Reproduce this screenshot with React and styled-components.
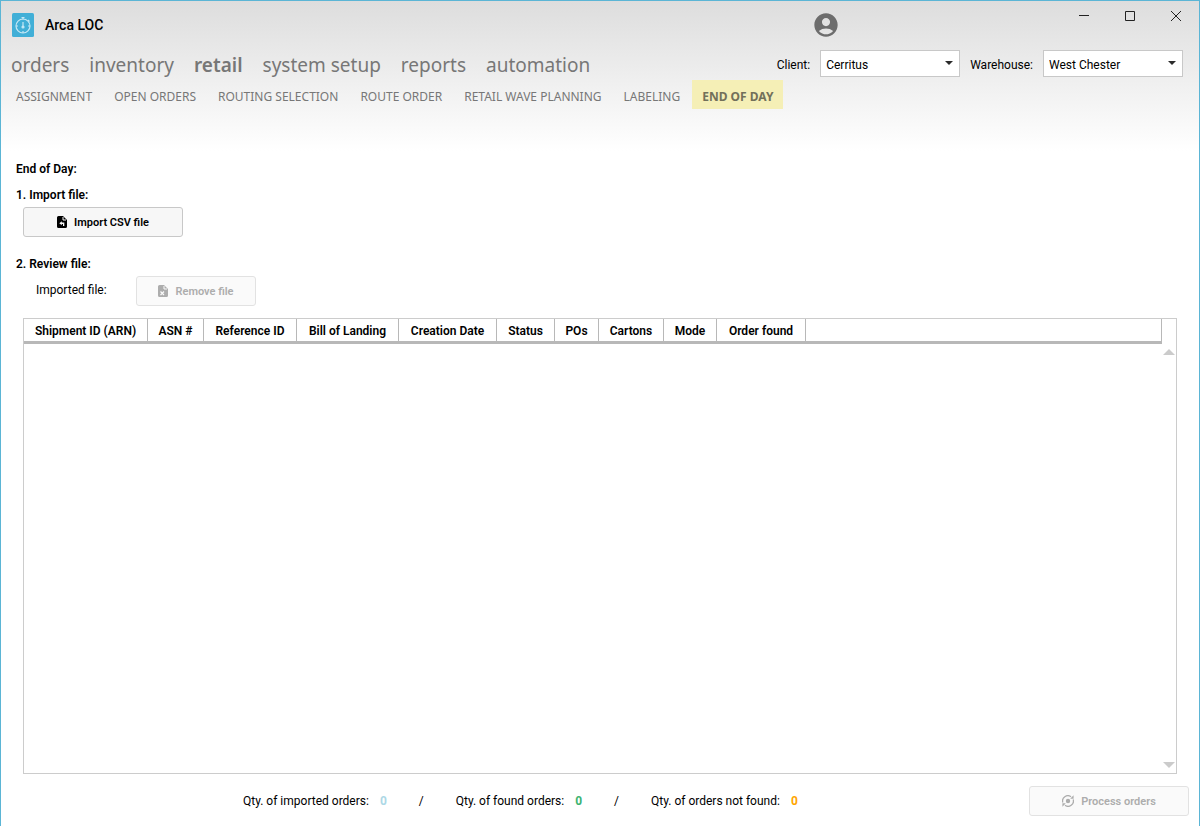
import React, { useState } from "react";
import styled, { createGlobalStyle } from "styled-components";
import { MdAccountCircle } from "react-icons/md";

const GlobalStyle = createGlobalStyle`
  * {
    box-sizing: border-box;
  }

  body {
    margin: 0;
    background: #ffffff;
    color: #000000;
    font-family: Roboto, sans-serif;
    font-size: 12px;
    line-height: 16px;
  }

  button, select {
    font-family: inherit;
  }
`;

const Window = styled.div`
  display: flex;
  flex-direction: column;
  min-height: 100vh;
  border: 1px solid #5bb5d5;
  border-bottom: none;
`;

const Header = styled.header`
  height: 150px;
  background: linear-gradient(#dddddd, #ffffff);
`;

const TitleBar = styled.div`
  display: flex;
  align-items: flex-start;
  height: 48px;
  padding-left: 11px;
`;

const Brand = styled.div`
  display: flex;
  align-items: center;
  flex: 1;
  gap: 11px;
  height: 48px;
`;

const AppName = styled.h1`
  margin: 0;
  font-size: 14px;
  line-height: 20px;
  font-weight: 500;
`;

const User = styled.div`
  display: flex;
  align-items: center;
  width: 249px;
  height: 48px;
  color: #6d6d6d;
`;

const WindowButton = styled.button`
  display: flex;
  align-items: center;
  justify-content: center;
  width: 46px;
  height: 29px;
  padding: 0;
  border: none;
  background: transparent;
`;

const MenuBar = styled.div`
  display: flex;
  align-items: flex-start;
  justify-content: space-between;
  height: 30px;
  padding: 1px 16px 0 10px;
`;

const Menu = styled.nav`
  display: flex;
  gap: 20px;
`;

const MenuLink = styled.a`
  color: #777777;
  font-family: "Noto Sans", sans-serif;
  font-size: 19px;
  line-height: 30px;
  font-weight: ${(props) => (props.$active ? 600 : 400)};
  text-decoration: none;
`;

const Filters = styled.div`
  display: flex;
  align-items: center;
  gap: 10px;
`;

const FilterLabel = styled.label`
  padding-top: 2px;
`;

const SelectBox = styled.span`
  display: flex;
  position: relative;

  svg {
    position: absolute;
    top: 11px;
    right: 7px;
    pointer-events: none;
  }
`;

const Select = styled.select`
  appearance: none;
  width: 140px;
  height: 27px;
  padding: 2px 20px 0 5px;
  border: 1px solid #c8c8c8;
  border-radius: 0;
  background: #ffffff;
  color: #000000;
  font-size: 12px;
`;

const SubMenu = styled.nav`
  display: flex;
  gap: 2px;
  padding: 1px 0 0 5px;
`;

const SubMenuLink = styled.a`
  padding: 4px 10px 0;
  background: ${(props) => (props.$active ? "#f5efb6" : "transparent")};
  color: ${(props) => (props.$active ? "#72705a" : "#777777")};
  font-family: "Noto Sans", sans-serif;
  font-size: 12px;
  font-weight: ${(props) => (props.$active ? 700 : 400)};
  line-height: 25px;
  text-decoration: none;
`;

const Content = styled.main`
  display: flex;
  flex-direction: column;
  flex: 1;
  padding: 9px 22px 0 15px;
`;

const Heading = styled.h2`
  margin: 0;
  font-size: 12px;
  line-height: 18px;
  font-weight: 600;
`;

const Step = styled.section`
  display: flex;
  flex-direction: column;
  align-items: flex-start;
  gap: 3px;
  margin: ${(props) => props.$margin};
`;

const FileRow = styled.div`
  display: flex;
  padding-left: 20px;
`;

const FileLabel = styled.span`
  width: 100px;
  line-height: 28px;
`;

const Button = styled.button`
  display: flex;
  align-items: center;
  justify-content: center;
  gap: 7px;
  width: ${(props) => props.$width};
  height: 30px;
  border: 1px solid #c8c8c8;
  border-radius: 3px;
  background: #f7f7f7;
  color: #000000;
  font-size: 11px;
  font-weight: 600;

  &:disabled {
    border-color: #e2e2e2;
    background: #fafafa;
    color: #adadad;
  }
`;

const ImportButton = styled(Button)`
  margin-left: 7px;
`;

const Grid = styled.div`
  display: flex;
  flex: 1;
  margin: 12px 0 0 7px;
  border: 1px solid #cccccc;
`;

const GridBody = styled.div`
  flex: 1;
`;

const Table = styled.table`
  width: 100%;
  table-layout: fixed;
  border-collapse: separate;
  border-spacing: 0;
`;

const Th = styled.th`
  width: ${(props) => props.$width};
  height: 25px;
  padding: 2px 0 0;
  border-right: 1px solid #b8b8b8;
  border-bottom: 3px solid #b8b8b8;
  font-size: 12px;
  line-height: 20px;
  font-weight: 600;
  white-space: nowrap;
`;

const ScrollBar = styled.div`
  display: flex;
  flex-direction: column;
  justify-content: space-between;
  align-items: center;
  width: 14px;
  padding: 30px 0 5px;
`;

const Footer = styled.footer`
  display: flex;
  align-items: center;
  justify-content: space-between;
  height: 52px;
  padding: 2px 10px 0 242px;
`;

const Totals = styled.div`
  display: flex;
  gap: 32px;
`;

const Total = styled.span`
  display: flex;
  gap: 11px;
`;

const Count = styled.strong`
  color: ${(props) => props.$color};
  font-weight: 700;
`;

const menu = ["orders", "inventory", "retail", "system setup", "reports", "automation"];

const subMenu = [
  "ASSIGNMENT",
  "OPEN ORDERS",
  "ROUTING SELECTION",
  "ROUTE ORDER",
  "RETAIL WAVE PLANNING",
  "LABELING",
  "END OF DAY",
];

const columns = [
  { name: "Shipment ID (ARN)", width: "124px" },
  { name: "ASN #", width: "56px" },
  { name: "Reference ID", width: "93px" },
  { name: "Bill of Landing", width: "102px" },
  { name: "Creation Date", width: "98px" },
  { name: "Status", width: "58px" },
  { name: "POs", width: "44px" },
  { name: "Cartons", width: "65px" },
  { name: "Mode", width: "53px" },
  { name: "Order found", width: "89px" },
];

function Logo() {
  return (
    <svg width="22" height="24" viewBox="0 0 22 24" fill="none">
      <rect width="22" height="24" rx="1.5" fill="#41afd7" />
      <g stroke="#c5e8f5" strokeWidth="1.2">
        <circle cx="11" cy="13" r="7" />
        <path d="M9.5 4.5h3M11 4.5v2M16 7l1.5 1.5M11 9v5M4 13h2M16 13h2M11 18v2" />
        <circle cx="11" cy="14" r="1" fill="#c5e8f5" />
      </g>
    </svg>
  );
}

function FileIcon({ remove }) {
  return (
    <svg width="10" height="12" viewBox="0 0 10 12">
      <path d="M1.5 0H6l4 4v6.5A1.5 1.5 0 0 1 8.5 12h-7A1.5 1.5 0 0 1 0 10.5v-9A1.5 1.5 0 0 1 1.5 0z" fill="currentColor" />
      <path d="M6 1v3h3" fill="none" stroke="#fafafa" />
      {remove ? (
        <path d="M2.5 6.5L6 10M6 6.5L2.5 10" stroke="#fafafa" strokeWidth="1.2" />
      ) : (
        <path d="M4.8 5.2L2.3 7.2l2.5 2V8H6v2h1.3V6.5H4.8z" fill="#fafafa" />
      )}
    </svg>
  );
}

function ProcessIcon() {
  return (
    <svg width="12" height="12" viewBox="0 0 12 12" fill="none" stroke="currentColor" strokeWidth="1.3">
      <path d="M.8 7.5A5.3 5.3 0 0 1 9 1.7M11.2 4.5A5.3 5.3 0 0 1 3 10.3" />
      <path d="M11.6.3v3.4H8.2zM.4 11.7V8.3h3.4z" fill="currentColor" stroke="none" />
      <circle cx="6" cy="6" r="2.2" fill="currentColor" stroke="none" />
    </svg>
  );
}

function Triangle({ down }) {
  return (
    <svg width="12" height="6" viewBox="0 0 12 6">
      <path d={down ? "M0 0h12L6 6z" : "M0 6h12L6 0z"} fill="#cbcbcb" />
    </svg>
  );
}

function Filter({ id, label, value }) {
  return (
    <>
      <FilterLabel htmlFor={id}>{label}</FilterLabel>
      <SelectBox>
        <Select id={id} defaultValue={value}>
          <option>{value}</option>
        </Select>
        <svg width="8" height="4" viewBox="0 0 8 4">
          <path d="M0 0h8L4 4z" fill="#2b2b2b" />
        </svg>
      </SelectBox>
    </>
  );
}

function Quantity({ label, color, children }) {
  return (
    <Total>
      {label} <Count $color={color}>{children}</Count>
    </Total>
  );
}

export default function App() {
  const [section, setSection] = useState("retail");
  const [page, setPage] = useState("END OF DAY");

  return (
    <Window>
      <GlobalStyle />
      <Header>
        <TitleBar>
          <Brand>
            <Logo />
            <AppName>Arca LOC</AppName>
          </Brand>
          <User>
            <MdAccountCircle size={28} />
          </User>
          <WindowButton aria-label="Minimize">
            <svg width="11" height="11" stroke="#222222">
              <path d="M0 5.5h10" />
            </svg>
          </WindowButton>
          <WindowButton aria-label="Maximize">
            <svg width="11" height="11" fill="none" stroke="#222222">
              <path d="M0.5 1.5h9v9h-9z" />
            </svg>
          </WindowButton>
          <WindowButton aria-label="Close">
            <svg width="11" height="11" stroke="#222222">
              <path d="M0 1l10 10M10 1L0 11" />
            </svg>
          </WindowButton>
        </TitleBar>
        <MenuBar>
          <Menu>
            {menu.map((item) => (
              <MenuLink key={item} href="#" $active={item === section} onClick={() => setSection(item)}>
                {item}
              </MenuLink>
            ))}
          </Menu>
          <Filters>
            <Filter id="client" label="Client:" value="Cerritus" />
            <Filter id="warehouse" label="Warehouse:" value="West Chester" />
          </Filters>
        </MenuBar>
        <SubMenu>
          {subMenu.map((item) => (
            <SubMenuLink key={item} href="#" $active={item === page} onClick={() => setPage(item)}>
              {item}
            </SubMenuLink>
          ))}
        </SubMenu>
      </Header>

      <Content>
        <Heading>End of Day:</Heading>
        <Step $margin="8px 0 0">
          <Heading>1. Import file:</Heading>
          <ImportButton $width="160px">
            <FileIcon />
            Import CSV file
          </ImportButton>
        </Step>
        <Step $margin="18px 0 0">
          <Heading>2. Review file:</Heading>
          <FileRow>
            <FileLabel>Imported file:</FileLabel>
            <Button $width="120px" disabled>
              <FileIcon remove />
              Remove file
            </Button>
          </FileRow>
        </Step>
        <Grid>
          <GridBody>
            <Table>
              <thead>
                <tr>
                  {columns.map((column) => (
                    <Th key={column.name} $width={column.width}>
                      {column.name}
                    </Th>
                  ))}
                  <Th />
                </tr>
              </thead>
            </Table>
          </GridBody>
          <ScrollBar>
            <Triangle />
            <Triangle down />
          </ScrollBar>
        </Grid>
      </Content>

      <Footer>
        <Totals>
          <Quantity label="Qty. of imported orders:" color="#add8e6">0</Quantity>
          <span>/</span>
          <Quantity label="Qty. of found orders:" color="#3cb371">0</Quantity>
          <span>/</span>
          <Quantity label="Qty. of orders not found:" color="#ffa500">0</Quantity>
        </Totals>
        <Button $width="160px" disabled>
          <ProcessIcon />
          Process orders
        </Button>
      </Footer>
    </Window>
  );
}
